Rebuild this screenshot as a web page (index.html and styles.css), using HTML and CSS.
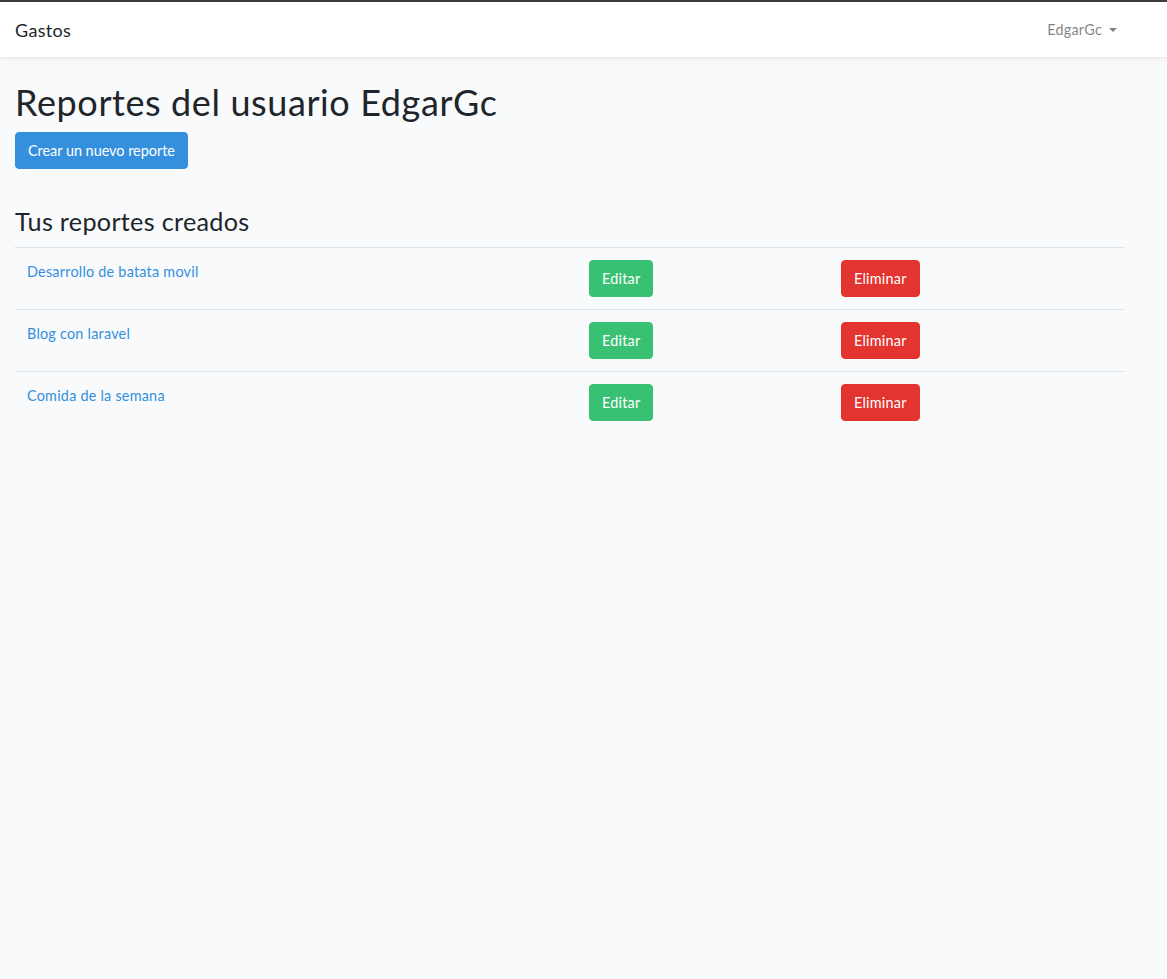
FILE: index.html
```html
<!DOCTYPE html>
<html lang="es">
<head>
<meta charset="utf-8">
<title>Gastos</title>
<link rel="stylesheet" href="styles.css">
</head>
<body>
<div class="app">
  <nav class="navbar">
    <div class="container nav-inner">
      <a class="brand" href="#">Gastos</a>
      <a class="user-toggle" href="#">EdgarGc<span class="caret"></span></a>
    </div>
  </nav>
  <main class="main">
    <div class="container">
      <h1 class="title">Reportes del usuario EdgarGc</h1>
      <a class="btn btn-primary" href="#">Crear un nuevo reporte</a>
      <h3 class="subtitle">Tus reportes creados</h3>
      <table class="table">
        <colgroup>
          <col class="c1"><col class="c2"><col class="c3">
        </colgroup>
        <tbody>
          <tr>
            <td><a class="link" href="#">Desarrollo de batata movil</a></td>
            <td><a class="btn btn-success" href="#">Editar</a></td>
            <td><a class="btn btn-danger" href="#">Eliminar</a></td>
          </tr>
          <tr>
            <td><a class="link" href="#">Blog con laravel</a></td>
            <td><a class="btn btn-success" href="#">Editar</a></td>
            <td><a class="btn btn-danger" href="#">Eliminar</a></td>
          </tr>
          <tr>
            <td><a class="link" href="#">Comida de la semana</a></td>
            <td><a class="btn btn-success" href="#">Editar</a></td>
            <td><a class="btn btn-danger" href="#">Eliminar</a></td>
          </tr>
        </tbody>
      </table>
    </div>
  </main>
</div>
</body>
</html>
```
FILE: styles.css
```css
* { box-sizing: border-box; }
html, body { margin: 0; padding: 0; }
body {
  background: #f8fafc;
  color: #212529;
  font-family: "Lato", "Noto Sans", sans-serif;
  font-size: 14.4px;
  line-height: 23px;
  letter-spacing: 0.016em;
  border-top: 2px solid #3c3c3c;
  min-height: 979px;
}
.container {
  width: 1140px;
  padding: 0 15px;
}
.navbar {
  background: #fff;
  box-shadow: 0 2px 4px rgba(0,0,0,0.075);
  height: 55px;
  display: flex;
  align-items: center;
}
.nav-inner {
  display: flex;
  align-items: center;
  justify-content: space-between;
}
.brand {
  font-size: 18px;
  color: #212529;
  text-decoration: none;
  line-height: 1;
  letter-spacing: 0.3px;
}
.user-toggle {
  color: rgba(0,0,0,0.5);
  text-decoration: none;
  padding: 0 8px;
  display: inline-flex;
  align-items: center;
}
.caret {
  display: inline-block;
  margin-left: 7px;
  width: 0;
  height: 0;
  border-top: 4.3px solid rgba(0,0,0,0.5);
  border-left: 4.3px solid transparent;
  border-right: 4.3px solid transparent;
}
.main { padding: 24px 0; }
.title {
  font-size: 36px;
  font-weight: 400;
  line-height: 43px;
  letter-spacing: 0.6px;
  margin: 0 0 8px;
}
.subtitle {
  font-size: 25.2px;
  font-weight: 400;
  line-height: 30px;
  letter-spacing: 0.3px;
  margin: 37px 0 11px;
}
.btn {
  display: inline-block;
  padding: 6px 12px;
  border: 1px solid transparent;
  border-radius: 4px;
  color: #fff;
  text-decoration: none;
  line-height: 23px;
  font-size: 14.4px;
}
.btn-primary { background: #3490dc; border-color: #3490dc; letter-spacing: 0; }
.btn-success { background: #38c172; border-color: #38c172; }
.btn-danger { background: #e3342f; border-color: #e3342f; }
.table {
  width: 1110px;
  border-collapse: collapse;
  table-layout: fixed;
}
.c1 { width: 562px; }
.c2 { width: 252px; }
.c3 { width: 296px; }
.table td {
  padding: 12px;
  vertical-align: top;
  border-top: 1px solid #dee2e6;
  line-height: 23px;
}
.table td .btn { vertical-align: top; }
.link { color: #3490dc; text-decoration: none; }
```
